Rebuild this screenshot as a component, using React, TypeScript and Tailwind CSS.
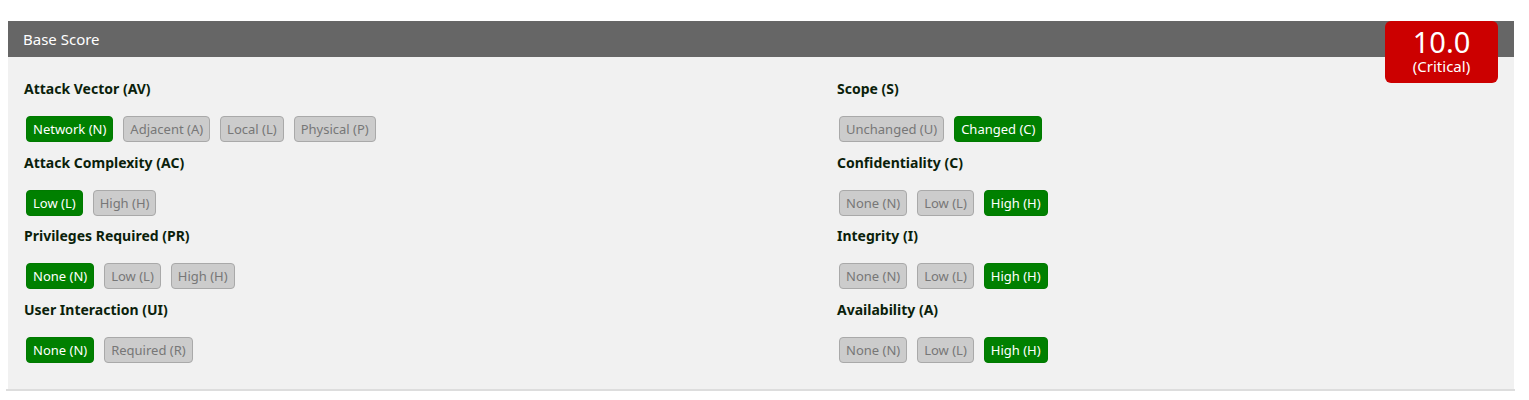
import React from "react";

interface Metric {
  label: string;
  options: string[];
  selected: number;
}

const leftMetrics: Metric[] = [
  { label: "Attack Vector (AV)", options: ["Network (N)", "Adjacent (A)", "Local (L)", "Physical (P)"], selected: 0 },
  { label: "Attack Complexity (AC)", options: ["Low (L)", "High (H)"], selected: 0 },
  { label: "Privileges Required (PR)", options: ["None (N)", "Low (L)", "High (H)"], selected: 0 },
  { label: "User Interaction (UI)", options: ["None (N)", "Required (R)"], selected: 0 },
];

const rightMetrics: Metric[] = [
  { label: "Scope (S)", options: ["Unchanged (U)", "Changed (C)"], selected: 1 },
  { label: "Confidentiality (C)", options: ["None (N)", "Low (L)", "High (H)"], selected: 2 },
  { label: "Integrity (I)", options: ["None (N)", "Low (L)", "High (H)"], selected: 2 },
  { label: "Availability (A)", options: ["None (N)", "Low (L)", "High (H)"], selected: 2 },
];

const MetricGroup: React.FC<{ metric: Metric }> = ({ metric }) => (
  <div className="h-[73.5px]">
    <h4 className="h-[22px] text-[14px] font-bold leading-[22px] text-[#0b1f0b]">{metric.label}</h4>
    <div className="mt-[16px] flex gap-[10px] pl-[2px]">
      {metric.options.map((opt, i) =>
        i === metric.selected ? (
          <button
            key={opt}
            className="h-[26px] rounded-[4px] border border-[#007a00] bg-[#008000] px-[6px] text-[13px] leading-[24px] text-white"
          >
            {opt}
          </button>
        ) : (
          <button
            key={opt}
            className="h-[26px] rounded-[4px] border border-[#a9a9a9] bg-[#cccccc] px-[6px] text-[13px] leading-[24px] text-[#777777]"
          >
            {opt}
          </button>
        )
      )}
    </div>
  </div>
);

export default function App() {
  return (
    <div className="min-h-[400px] bg-white pt-[21px] font-['Noto_Sans','Open_Sans',sans-serif]">
      <div className="relative mx-[8px] w-[1506px]">
        <div className="flex h-[36px] items-center bg-[#666666] px-[15px] text-[15px] text-white">Base Score</div>

        {/* severity badge sits on top of the header bar */}
        <div className="absolute right-[16px] top-0 flex h-[62px] w-[113px] flex-col items-center rounded-[6px] bg-[#cc0000] pt-[6px] text-white">
          <span className="text-[29px] leading-[30px]">10.0</span>
          <span className="text-[15px] leading-[18px]">(Critical)</span>
        </div>

        <div className="grid grid-cols-[813px_1fr] bg-[#f1f1f1] pb-[17px] pl-[16px] pt-[21px]">
          <div>
            {leftMetrics.map((m) => (
              <MetricGroup key={m.label} metric={m} />
            ))}
          </div>
          <div>
            {rightMetrics.map((m) => (
              <MetricGroup key={m.label} metric={m} />
            ))}
          </div>
        </div>
      </div>
      <div className="mx-[6px] h-[2px] w-[1509px] bg-[#dddddd]" />
    </div>
  );
}
